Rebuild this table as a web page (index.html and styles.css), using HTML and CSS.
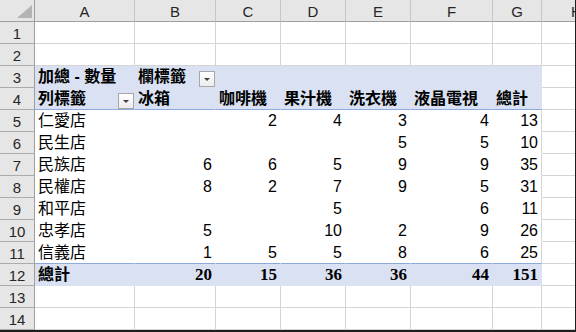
FILE: index.html
```html
<!DOCTYPE html>
<html lang="zh-Hant">
<head>
<meta charset="utf-8">
<title>樞紐分析表</title>
<link rel="stylesheet" href="styles.css">
</head>
<body>
<div class="sheet">
  <div class="grid">
    <!-- column headers -->
    <div class="corner"><span class="corner-tri"></span></div>
    <div class="colh">A</div>
    <div class="colh">B</div>
    <div class="colh">C</div>
    <div class="colh">D</div>
    <div class="colh">E</div>
    <div class="colh">F</div>
    <div class="colh">G</div>
    <div class="colh last">H</div>

    <!-- row 1 -->
    <div class="rowh">1</div>
    <div class="c"></div><div class="c"></div><div class="c"></div><div class="c"></div><div class="c"></div><div class="c"></div><div class="c"></div><div class="c last"></div>
    <!-- row 2 -->
    <div class="rowh">2</div>
    <div class="c"></div><div class="c"></div><div class="c"></div><div class="c"></div><div class="c"></div><div class="c"></div><div class="c"></div><div class="c last"></div>

    <!-- row 3: pivot caption -->
    <div class="rowh">3</div>
    <div class="c ph bold">加總 - 數量</div>
    <div class="c ph bold split">欄標籤<span class="dd"></span></div>
    <div class="c ph"></div><div class="c ph"></div><div class="c ph"></div><div class="c ph"></div><div class="c ph"></div>
    <div class="c last"></div>

    <!-- row 4: column labels -->
    <div class="rowh">4</div>
    <div class="c ph bold split under">列標籤<span class="dd"></span></div>
    <div class="c ph bold under">冰箱</div>
    <div class="c ph bold under">咖啡機</div>
    <div class="c ph bold under">果汁機</div>
    <div class="c ph bold under">洗衣機</div>
    <div class="c ph bold under">液晶電視</div>
    <div class="c ph bold under">總計</div>
    <div class="c last"></div>

    <!-- rows 5-11: data -->
    <div class="rowh">5</div>
    <div class="c pb">仁愛店</div><div class="c pb num"></div><div class="c pb num">2</div><div class="c pb num">4</div><div class="c pb num">3</div><div class="c pb num">4</div><div class="c pb num edge">13</div><div class="c last"></div>

    <div class="rowh">6</div>
    <div class="c pb">民生店</div><div class="c pb num"></div><div class="c pb num"></div><div class="c pb num"></div><div class="c pb num">5</div><div class="c pb num">5</div><div class="c pb num edge">10</div><div class="c last"></div>

    <div class="rowh">7</div>
    <div class="c pb">民族店</div><div class="c pb num">6</div><div class="c pb num">6</div><div class="c pb num">5</div><div class="c pb num">9</div><div class="c pb num">9</div><div class="c pb num edge">35</div><div class="c last"></div>

    <div class="rowh">8</div>
    <div class="c pb">民權店</div><div class="c pb num">8</div><div class="c pb num">2</div><div class="c pb num">7</div><div class="c pb num">9</div><div class="c pb num">5</div><div class="c pb num edge">31</div><div class="c last"></div>

    <div class="rowh">9</div>
    <div class="c pb">和平店</div><div class="c pb num"></div><div class="c pb num"></div><div class="c pb num">5</div><div class="c pb num"></div><div class="c pb num">6</div><div class="c pb num edge">11</div><div class="c last"></div>

    <div class="rowh">10</div>
    <div class="c pb">忠孝店</div><div class="c pb num">5</div><div class="c pb num"></div><div class="c pb num">10</div><div class="c pb num">2</div><div class="c pb num">9</div><div class="c pb num edge">26</div><div class="c last"></div>

    <div class="rowh">11</div>
    <div class="c pb under">信義店</div><div class="c pb num under">1</div><div class="c pb num under">5</div><div class="c pb num under">5</div><div class="c pb num under">8</div><div class="c pb num under">6</div><div class="c pb num under edge">25</div><div class="c last"></div>

    <!-- row 12: grand total -->
    <div class="rowh">12</div>
    <div class="c pt bold">總計</div><div class="c pt tnum">20</div><div class="c pt tnum">15</div><div class="c pt tnum">36</div><div class="c pt tnum">36</div><div class="c pt tnum">44</div><div class="c pt tnum">151</div><div class="c last"></div>

    <!-- rows 13-14 -->
    <div class="rowh">13</div>
    <div class="c"></div><div class="c"></div><div class="c"></div><div class="c"></div><div class="c"></div><div class="c"></div><div class="c"></div><div class="c last"></div>
    <div class="rowh">14</div>
    <div class="c"></div><div class="c"></div><div class="c"></div><div class="c"></div><div class="c"></div><div class="c"></div><div class="c"></div><div class="c last"></div>
  </div>
</div>
</body>
</html>
```

FILE: styles.css
```css
html, body {
  margin: 0;
  padding: 0;
  background: #ffffff;
}

.sheet {
  width: 576px;
  height: 332px;
  box-sizing: border-box;
  border-right: 1px solid #1e1e1e;
  border-bottom: 2px solid #1e1e1e;
  overflow: hidden;
}

.grid {
  display: grid;
  grid-template-columns: 35px 100px 81px 65px 65px 65px 82px 49px 33px;
  grid-auto-rows: 22px;
  font-family: "Liberation Sans", "Noto Sans CJK TC", sans-serif;
  font-size: 16px;
  color: #000;
}

/* header strip */
.corner {
  background: #e6e6e6;
  border-right: 1px solid #9e9e9e;
  border-bottom: 1px solid #9e9e9e;
  box-sizing: border-box;
  display: flex;
  justify-content: flex-end;
  align-items: flex-end;
  padding: 0 2px 3px 0;
}

.corner-tri {
  width: 15px;
  height: 13px;
  background: #b4b4b4;
  clip-path: polygon(100% 0, 100% 100%, 0 100%);
}

.colh {
  background: #e6e6e6;
  border-right: 1px solid #c6c6c6;
  border-bottom: 1px solid #9e9e9e;
  box-sizing: border-box;
  display: flex;
  justify-content: center;
  align-items: center;
  font-size: 15px;
  color: #262626;
  padding-top: 1px;
}

/* the last column is only partly on screen */
.colh.last {
  border-right: none;
  justify-content: flex-start;
  padding-left: 29px;
  overflow: hidden;
}

.rowh {
  background: #e6e6e6;
  border-right: 1px solid #9e9e9e;
  border-bottom: 1px solid #ababab;
  box-sizing: border-box;
  display: flex;
  justify-content: center;
  align-items: center;
  font-size: 15px;
  color: #262626;
  padding-top: 1px;
}

/* worksheet cells */
.c {
  box-sizing: border-box;
  border-right: 1px solid #d4d4d4;
  border-bottom: 1px solid #d4d4d4;
  display: flex;
  align-items: flex-end;
  padding: 0 3px 1px 3px;
  line-height: 18px;
  white-space: nowrap;
  overflow: hidden;
}

.c.last {
  border-right: none;
}

.bold {
  font-weight: 700;
}

.split {
  justify-content: space-between;
  padding-right: 0;
}

.num {
  justify-content: flex-end;
}

/* pivot header band */
.ph {
  background: #d9e1f2;
  border-right-color: #d9e1f2;
  border-bottom-color: #d9e1f2;
}

/* pivot body */
.pb {
  background: #ffffff;
  border-right-color: #ffffff;
  border-bottom-color: #ffffff;
}

.pb.edge {
  border-right-color: #d4d4d4;
}

.under {
  border-bottom-color: #8ea9db;
}

/* grand total band */
.pt {
  background: #d9e1f2;
  border-right-color: #d9e1f2;
  border-bottom-color: #d9e1f2;
}

.tnum {
  justify-content: flex-end;
  font-family: "Liberation Serif", serif;
  font-weight: 700;
  font-size: 17px;
}

/* field filter button */
.dd {
  width: 16px;
  height: 16px;
  box-sizing: border-box;
  border: 1px solid #a6a6a6;
  background: linear-gradient(#ffffff, #ececec);
  display: flex;
  justify-content: center;
  align-items: center;
  align-self: flex-end;
  margin-bottom: -1px;
}

.dd::after {
  content: "";
  width: 0;
  height: 0;
  border-left: 3px solid transparent;
  border-right: 3px solid transparent;
  border-top: 3px solid #404040;
}
```
